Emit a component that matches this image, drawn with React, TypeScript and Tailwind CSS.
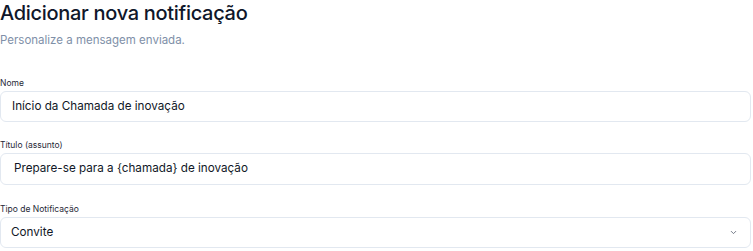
import React from "react";

function Field({ label, children, className = "" }: { label: string; children: React.ReactNode; className?: string }) {
  return (
    <div className={"flex flex-col " + className}>
      <label className="text-[8.5px] leading-[12px] text-[#1f2937] mb-[2px]">{label}</label>
      {children}
    </div>
  );
}

export default function App() {
  return (
    <div className="w-[751px] bg-white" style={{ fontFamily: "Inter, 'Noto Sans', sans-serif" }}>
      <h1 className="text-[20px] leading-[26px] font-medium text-[#0f172a] tracking-[-0.3px]">Adicionar nova notificação</h1>
      <p className="mt-[6px] text-[11.5px] leading-[16px] text-[#8090a8]">Personalize a mensagem enviada.</p>
      <div className="mt-[29px] flex flex-col gap-[17px]">
        <Field label="Nome">
          <div className="h-[31px] border border-[#e2e8f0] rounded-[6px] flex items-center px-[11px] text-[11.7px] text-[#111827]">
            Início da Chamada de inovação
          </div>
        </Field>
        <Field label="Título (assunto)">
          <div className="h-[32px] border border-[#e2e8f0] rounded-[6px] flex items-center px-[13px] text-[11.7px] text-[#111827]">
            Prepare-se para a {"{chamada}"} de inovação
          </div>
        </Field>
        <Field label="Tipo de Notificação" className="mt-[1px]">
          <div className="h-[31px] border border-[#e2e8f0] rounded-[6px] flex items-center justify-between pl-[10px] pr-[12px] text-[11.7px] text-[#111827]">
            <span>Convite</span>
            <svg width="9" height="9" viewBox="0 0 24 24" fill="none" stroke="#6b7280" strokeWidth="2.5" strokeLinecap="round" strokeLinejoin="round">
              <path d="m6 9 6 6 6-6" />
            </svg>
          </div>
        </Field>
      </div>
    </div>
  );
}
